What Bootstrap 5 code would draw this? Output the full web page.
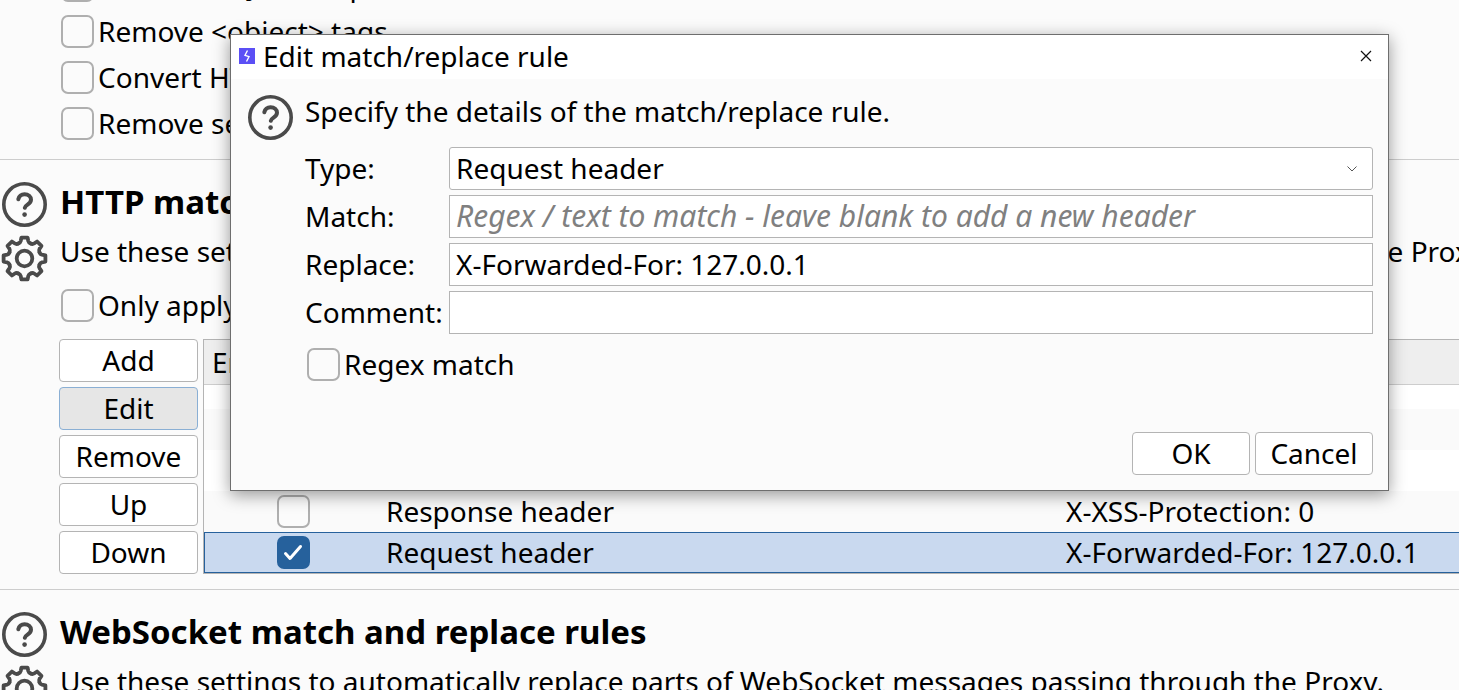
<!DOCTYPE html>
<html lang="en">
<head>
<meta charset="utf-8">
<meta name="viewport" content="width=device-width, initial-scale=1">
<title>Proxy settings</title>
<link href="https://cdn.jsdelivr.net/npm/bootstrap@5.3.0/dist/css/bootstrap.min.css" rel="stylesheet">
<style>
  body { font-family: "Noto Sans", "Open Sans", sans-serif; font-size: 28px; line-height: 40px; color: #000; background: #fbfbfb; overflow: hidden; height: 100vh; }
  .settings { margin-top: -38px; height: calc(100vh + 38px); overflow: hidden; }
  .option-list { padding: 0 0 13px 61px; }
  .option { height: 46px; gap: 4px; }
  .form-check-input { width: 33px; height: 33px; margin: 0; flex: none; border: 2px solid #afafaf; border-radius: 8px; background-color: #fbfbfb; }
  .form-check-input:checked[type=checkbox] { background-color: #26619c; border-color: #26619c; background-size: 29px 29px; background-position: center; background-image: url("data:image/svg+xml,%3Csvg xmlns='http://www.w3.org/2000/svg' viewBox='0 0 29 29'%3E%3Cpath d='m6.500 15.500 4.500 5L21.500 8.500' fill='none' stroke='%23fff' stroke-width='3' stroke-linecap='round' stroke-linejoin='round'/%3E%3C/svg%3E"); }
  .rule-section { border-top: 1px solid #cdcdcd; height: 430px; }
  .side-icons { width: 60px; padding: 22px 0 0 1px; gap: 6px; flex: none; }
  .side-icons svg { display: block; }
  .section-title { font-size: 33px; line-height: 48px; font-weight: 700; margin: 0; padding-top: 18px; }
  .section-body { min-width: 0; }
  .section-text { margin: 5px 0 11px; white-space: nowrap; }
  .scope-option { padding-left: 1px; }
  .flat-btn { height: 43px; padding: 0 0 1px; border: 1px solid #b4b4b4; border-radius: 4px; background: #fff; color: #000; font-size: 28px; line-height: 40px; }
  .btn.flat-btn.active { background: #e6e6e6; border-color: #8aafd4; color: #000; }
  .rule-buttons { width: 139px; gap: 5px; flex: none; }
  .rule-area { gap: 5px; padding-top: 11px; margin-left: -1px; }
  .rule-frame { height: 235px; border: 1px solid #b4b4b4; border-right: 0; min-width: 0; overflow: hidden; background: #fff; }
  .rule-table { table-layout: fixed; width: 100%; border-collapse: separate; border-spacing: 0; white-space: nowrap; }
  .rule-table th { background: #eee; border-bottom: 1px solid #cdcdcd; height: 45px; padding: 0 8px; font-weight: 400; }
  .rule-table td { height: 41px; padding: 0 8px; line-height: 39px; }
  .rule-table .cut-row td { height: 24px; }
  .rule-table .striped td { background: #fafafa; }
  .rule-table .picked td { background: #c9d9ef; border-top: 1px solid #26619c; border-bottom: 1px solid #26619c; }
  .rule-table .picked td:first-child { border-left: 1px solid #26619c; }
  .rule-table td:first-child { padding: 0 4px 0 8px; }
  .rule-table .form-check-input { display: block; margin: 0 auto; }
  .col-enabled { width: 174px; } .col-item { width: 301px; } .col-match { width: 379px; }
  .rule-dialog { position: absolute; top: 34px; left: 230px; right: 70px; border: 1px solid #6e6e6e; background: #fbfbfb; box-shadow: 0 4px 16px rgba(0,0,0,.4); }
  .dialog-title { height: 44px; padding: 0 16px 2px 8px; gap: 8px; background: #fff; }
  .dialog-title h1 { font-size: 28px; line-height: 40px; font-weight: 400; margin: 0; }
  .close-btn { border: 0; background: none; padding: 0; width: 12px; height: 12px; display: flex; }
  .dialog-main { padding: 16px 15px 15px; gap: 11px; }
  .dialog-main > svg { flex: none; margin-left: 1px; }
  .dialog-text { margin: -4px 0 16px; }
  .rule-form { display: grid; grid-template-columns: 139px 1fr; column-gap: 5px; row-gap: 5px; }
  .rule-form label { padding-bottom: 2px; }
  .rule-form .form-select, .rule-form .form-control { height: 43px; font-size: 28px; line-height: 40px; padding: 0 6px 1px; color: #000; background-color: #fff; border: 1px solid #b4b4b4; border-radius: 0; }
  .rule-form .form-select { border-radius: 3px; background-image: url("data:image/svg+xml,%3Csvg xmlns='http://www.w3.org/2000/svg' viewBox='0 0 12 12'%3E%3Cpath d='M1.500 3.500 6 8l4.500-4.500' fill='none' stroke='%23555'/%3E%3C/svg%3E"); background-size: 12px 12px; background-position: right 14px center; }
  .rule-form .form-control::placeholder { color: #808080; font-size: 30px; font-style: italic; opacity: 1; }
  .regex-option { margin: 7px 0 0 2px; }
  .dialog-actions { gap: 5px; margin-top: 45px; }
  .dialog-actions .flat-btn { width: 118px; }
</style>
</head>
<body>
<svg class="d-none" aria-hidden="true">
  <symbol id="help" viewBox="0 0 47 47"><g fill="none" stroke="#4a4a4a" stroke-width="3.600" stroke-linecap="round"><circle cx="23.500" cy="22.500" r="20.700"/><path d="M17.300 17.200c.8-3.200 3.300-5 6.300-5 3.600 0 6.400 2.300 6.400 5.600 0 4.600-5.600 4.800-6.200 8" stroke-width="4"/></g><circle cx="23.600" cy="32.600" r="2.300" fill="#4a4a4a"/></symbol>
  <symbol id="gear" viewBox="0 0 47 47">
    <g transform="translate(23.500 23.500)" fill="none" stroke="#4a4a4a" stroke-width="3.800" stroke-linecap="round" stroke-linejoin="round">
      <circle r="7.800"/>
      <path id="tooth" d="M-6.200-15Q-4.200-15.700-3.800-17.400L-3.100-20.900H3.100L3.800-17.400Q4.200-15.700 6.200-15"/>
      <use href="#tooth" transform="rotate(45)"/><use href="#tooth" transform="rotate(90)"/><use href="#tooth" transform="rotate(135)"/><use href="#tooth" transform="rotate(180)"/><use href="#tooth" transform="rotate(225)"/><use href="#tooth" transform="rotate(270)"/><use href="#tooth" transform="rotate(315)"/>
    </g>
  </symbol>
</svg>

<main class="settings">
  <div class="option-list">
    <div class="option d-flex align-items-center"><input class="form-check-input" type="checkbox" id="o1"><label for="o1">Remove all JavaScript</label></div>
    <div class="option d-flex align-items-center"><input class="form-check-input" type="checkbox" id="o2"><label for="o2">Remove &lt;object&gt; tags</label></div>
    <div class="option d-flex align-items-center"><input class="form-check-input" type="checkbox" id="o3"><label for="o3">Convert HTTPS links to HTTP</label></div>
    <div class="option d-flex align-items-center"><input class="form-check-input" type="checkbox" id="o4"><label for="o4">Remove secure flag from cookies</label></div>
  </div>

  <section class="rule-section d-flex">
    <div class="side-icons d-flex flex-column"><svg width="47" height="47"><use href="#help"/></svg><svg width="47" height="47"><use href="#gear"/></svg></div>
    <div class="section-body flex-grow-1">
      <h2 class="section-title">HTTP match and replace rules</h2>
      <p class="section-text">Use these settings to automatically replace parts of HTTP requests and responses passing through the Proxy.</p>
      <div class="option scope-option d-flex align-items-center"><input class="form-check-input" type="checkbox" id="scope"><label for="scope">Only apply to in-scope items</label></div>
      <div class="rule-area d-flex">
        <div class="rule-buttons d-flex flex-column">
          <button type="button" class="btn flat-btn">Add</button>
          <button type="button" class="btn flat-btn active">Edit</button>
          <button type="button" class="btn flat-btn">Remove</button>
          <button type="button" class="btn flat-btn">Up</button>
          <button type="button" class="btn flat-btn">Down</button>
        </div>
        <div class="rule-frame flex-grow-1">
          <table class="rule-table">
            <colgroup><col class="col-enabled"><col class="col-item"><col class="col-match"><col></colgroup>
            <thead><tr><th>Enabled</th><th>Item</th><th>Match</th><th>Replace</th></tr></thead>
            <tbody>
              <tr class="cut-row"><td></td><td></td><td></td><td></td></tr>
              <tr class="striped"><td></td><td></td><td></td><td></td></tr>
              <tr><td></td><td></td><td></td><td></td></tr>
              <tr class="striped"><td><input class="form-check-input" type="checkbox" aria-label="Enable response header rule"></td><td>Response header</td><td></td><td>X-XSS-Protection: 0</td></tr>
              <tr class="picked"><td><input class="form-check-input" type="checkbox" checked aria-label="Enable request header rule"></td><td>Request header</td><td></td><td>X-Forwarded-For: 127.0.0.1</td></tr>
            </tbody>
          </table>
        </div>
      </div>
    </div>
  </section>

  <section class="rule-section d-flex">
    <div class="side-icons d-flex flex-column"><svg width="47" height="47"><use href="#help"/></svg><svg width="47" height="47"><use href="#gear"/></svg></div>
    <div class="section-body flex-grow-1">
      <h2 class="section-title">WebSocket match and replace rules</h2>
      <p class="section-text">Use these settings to automatically replace parts of WebSocket messages passing through the Proxy.</p>
    </div>
  </section>
</main>

<div class="rule-dialog" role="dialog" aria-labelledby="dialogTitle">
  <header class="dialog-title d-flex align-items-center">
    <svg width="16" height="16" viewBox="0 0 16 16" aria-hidden="true"><path fill="#5b4ff5" d="M0 0h16v16H0z"/><path d="M8.500 2.500 6 7.300l4 1.400-2.500 4.800" fill="none" stroke="#fff" stroke-width="1.400"/></svg>
    <h1 id="dialogTitle">Edit match/replace rule</h1>
    <button type="button" class="close-btn ms-auto" aria-label="Close"><svg width="12" height="12" viewBox="0 0 12 12"><path d="m1 1 10 10M11 1 1 11" stroke="#111" stroke-width="1.200"/></svg></button>
  </header>
  <div class="dialog-main d-flex">
    <svg width="47" height="47"><use href="#help"/></svg>
    <form class="flex-grow-1">
      <p class="dialog-text">Specify the details of the match/replace rule.</p>
      <div class="rule-form align-items-center">
        <label for="type">Type:</label>
        <select class="form-select" id="type"><option>Request header</option></select>
        <label for="match">Match:</label>
        <input class="form-control" id="match" type="text" placeholder="Regex / text to match - leave blank to add a new header">
        <label for="replace">Replace:</label>
        <input class="form-control" id="replace" type="text" value="X-Forwarded-For: 127.0.0.1">
        <label for="comment">Comment:</label>
        <input class="form-control" id="comment" type="text">
      </div>
      <div class="option regex-option d-flex align-items-center"><input class="form-check-input" type="checkbox" id="regex"><label for="regex">Regex match</label></div>
      <div class="dialog-actions d-flex justify-content-end">
        <button type="button" class="btn flat-btn">OK</button>
        <button type="button" class="btn flat-btn">Cancel</button>
      </div>
    </form>
  </div>
</div>
<script src="https://cdn.jsdelivr.net/npm/bootstrap@5.3.0/dist/js/bootstrap.bundle.min.js"></script>
</body>
</html>
